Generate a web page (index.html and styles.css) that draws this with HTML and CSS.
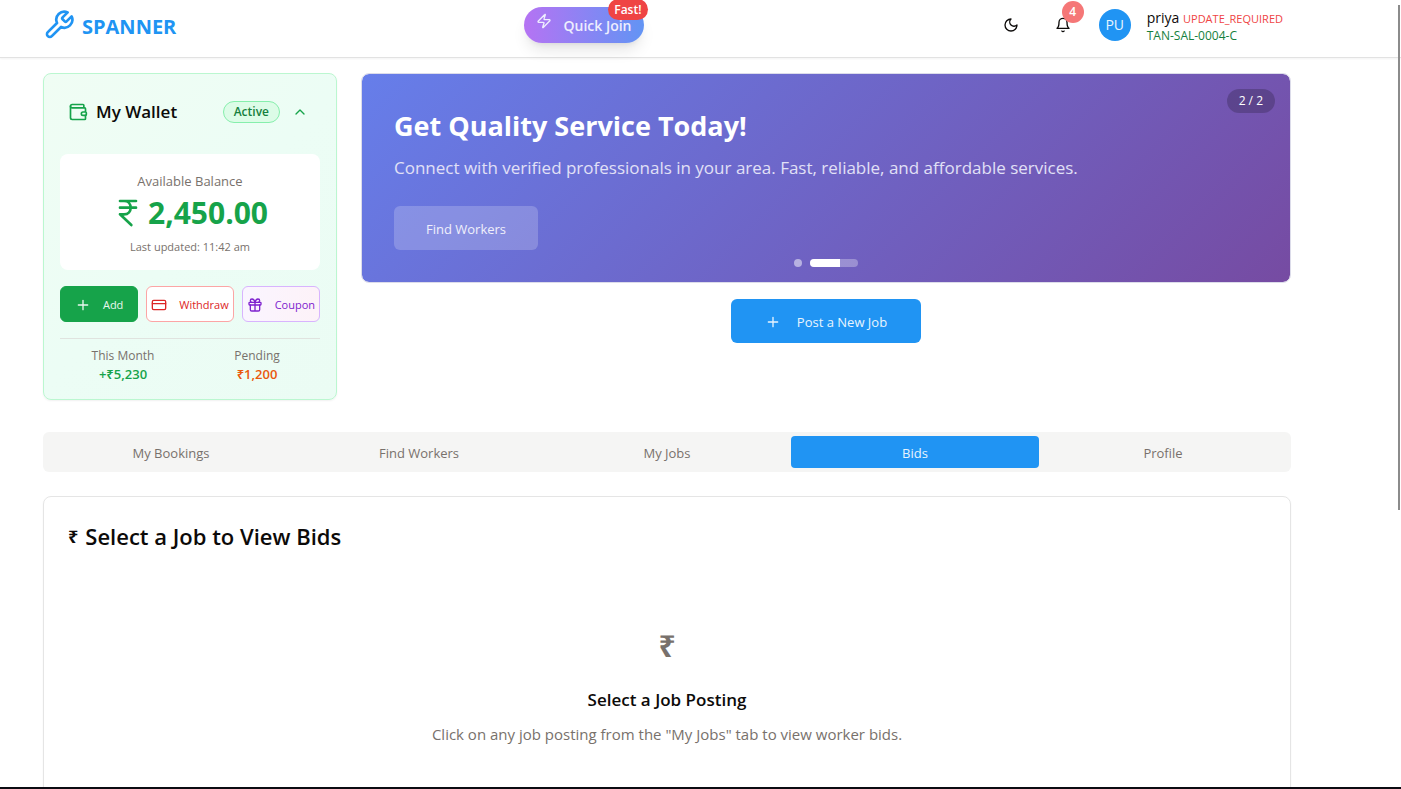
FILE: index.html
```html
<!DOCTYPE html>
<html lang="en">
<head>
<meta charset="utf-8">
<meta name="viewport" content="width=device-width, initial-scale=1">
<title>Spanner</title>
<link rel="stylesheet" href="styles.css">
</head>
<body>
<header class="topbar">
  <div class="wrap topbar-inner">
    <a class="brand" href="#">
      <svg class="icon brand-icon" viewBox="0 0 24 24"><path d="M14.7 6.3a1 1 0 0 0 0 1.4l1.6 1.6a1 1 0 0 0 1.4 0l3.77-3.77a6 6 0 0 1-7.94 7.94l-6.91 6.91a2.12 2.12 0 0 1-3-3l6.91-6.91a6 6 0 0 1 7.94-7.94l-3.76 3.76z"/></svg>
      <span class="brand-name">SPANNER</span>
    </a>
    <button class="quick" type="button">
      <svg class="icon quick-icon" viewBox="0 0 24 24"><path d="M4 14a1 1 0 0 1-.78-1.63l9.9-10.2a.5.5 0 0 1 .86.46l-1.92 6.02A1 1 0 0 0 13 10h7a1 1 0 0 1 .78 1.63l-9.9 10.2a.5.5 0 0 1-.86-.46l1.92-6.02A1 1 0 0 0 11 14z"/></svg>
      <span class="quick-label">Quick Join</span>
      <span class="quick-badge">Fast!</span>
    </button>
    <div class="tools">
      <button class="tool" type="button" aria-label="Toggle theme">
        <svg class="icon" viewBox="0 0 24 24"><path d="M12 3a6 6 0 0 0 9 9 9 9 0 1 1-9-9Z"/></svg>
      </button>
      <button class="tool" type="button" aria-label="Notifications">
        <svg class="icon" viewBox="0 0 24 24"><path d="M6 8a6 6 0 0 1 12 0c0 7 3 9 3 9H3s3-2 3-9"/><path d="M10.3 21a1.94 1.94 0 0 0 3.4 0"/></svg>
        <span class="count">4</span>
      </button>
      <button class="account" type="button">
        <span class="avatar">PU</span>
        <span class="who">
          <span class="who-name">priya <span class="who-flag">UPDATE_REQUIRED</span></span>
          <span class="who-id">TAN-SAL-0004-C</span>
        </span>
      </button>
    </div>
  </div>
</header>

<main class="wrap main">
  <section class="overview">
    <article class="wallet">
      <div class="wallet-head">
        <svg class="icon wallet-icon" viewBox="0 0 24 24"><path d="M19 7V4a1 1 0 0 0-1-1H5a2 2 0 0 0 0 4h15a1 1 0 0 1 1 1v4h-3a2 2 0 0 0 0 4h3a1 1 0 0 0 1-1v-2a1 1 0 0 0-1-1"/><path d="M3 5v14a2 2 0 0 0 2 2h15a1 1 0 0 0 1-1v-4"/></svg>
        <h2 class="wallet-title">My Wallet</h2>
        <span class="status">Active</span>
        <button class="collapse" type="button" aria-label="Collapse wallet">
          <svg class="icon" viewBox="0 0 24 24"><path d="m18 15-6-6-6 6"/></svg>
        </button>
      </div>
      <div class="balance">
        <p class="balance-label">Available Balance</p>
        <p class="balance-value">
          <svg class="icon rupee" viewBox="0 0 24 24"><path d="M6 3h12M6 8h12M6 13l8.500 8M6 13h3M9 13c6.667 0 6.667-10 0-10"/></svg>
          <span>2,450.00</span>
        </p>
        <p class="balance-note">Last updated: 11:42 am</p>
      </div>
      <div class="actions">
        <button class="action add" type="button">
          <svg class="icon" viewBox="0 0 24 24"><path d="M5 12h14M12 5v14"/></svg><span>Add</span>
        </button>
        <button class="action withdraw" type="button">
          <svg class="icon" viewBox="0 0 24 24"><rect width="20" height="14" x="2" y="5" rx="2"/><path d="M2 10h20"/></svg><span>Withdraw</span>
        </button>
        <button class="action coupon" type="button">
          <svg class="icon" viewBox="0 0 24 24"><rect x="3" y="8" width="18" height="4" rx="1"/><path d="M12 8v13M19 12v7a2 2 0 0 1-2 2H7a2 2 0 0 1-2-2v-7M7.500 8a2.500 2.500 0 0 1 0-5A4.800 8 0 0 1 12 8a4.800 8 0 0 1 4.500-5 2.500 2.500 0 0 1 0 5"/></svg><span>Coupon</span>
        </button>
      </div>
      <dl class="stats">
        <div class="stat"><dt>This Month</dt><dd class="gain">+₹5,230</dd></div>
        <div class="stat"><dt>Pending</dt><dd class="due">₹1,200</dd></div>
      </dl>
    </article>

    <div class="feature">
      <section class="banner">
        <h1 class="banner-title">Get Quality Service Today!</h1>
        <p class="banner-text">Connect with verified professionals in your area. Fast, reliable, and affordable services.</p>
        <button class="banner-button" type="button">Find Workers</button>
        <span class="slide-count">2 / 2</span>
        <div class="dots">
          <button class="dot" type="button" aria-label="Slide 1"></button>
          <button class="dot dot-active" type="button" aria-label="Slide 2"><span class="dot-fill"></span></button>
        </div>
      </section>
      <button class="post" type="button">
        <svg class="icon" viewBox="0 0 24 24"><path d="M5 12h14M12 5v14"/></svg><span>Post a New Job</span>
      </button>
    </div>
  </section>

  <nav class="tabs" role="tablist">
    <button class="tab" type="button" role="tab">My Bookings</button>
    <button class="tab" type="button" role="tab">Find Workers</button>
    <button class="tab" type="button" role="tab">My Jobs</button>
    <button class="tab tab-active" type="button" role="tab" aria-selected="true">Bids</button>
    <button class="tab" type="button" role="tab">Profile</button>
  </nav>

  <section class="panel">
    <h2 class="panel-title"><span class="panel-mark">₹</span><span>Select a Job to View Bids</span></h2>
    <div class="empty">
      <div class="empty-mark">₹</div>
      <h3 class="empty-title">Select a Job Posting</h3>
      <p class="empty-text">Click on any job posting from the "My Jobs" tab to view worker bids.</p>
    </div>
  </section>
</main>
<div class="scroll-thumb"></div>
<div class="bottom-edge"></div>
</body>
</html>
```
FILE: styles.css
```css
* { box-sizing: border-box; margin: 0; padding: 0; }
body {
  height: 100vh;
  overflow: hidden;
  background: #fff;
  color: #0c0a09;
  font: 14px/20px "Open Sans", "Noto Sans", sans-serif;
}
button { font: inherit; color: inherit; background: none; border: 0; cursor: pointer; }
a { text-decoration: none; }
.icon {
  flex: none;
  width: 16px;
  height: 16px;
  fill: none;
  stroke: currentColor;
  stroke-width: 2;
  stroke-linecap: round;
  stroke-linejoin: round;
}
.wrap { padding: 0 110px 0 43px; }

.topbar { height: 58px; border-bottom: 1px solid #e2e2e2; box-shadow: 0 1px 2px rgba(0, 0, 0, .05); }
.topbar-inner { display: flex; justify-content: space-between; align-items: center; height: 50px; }
.brand { display: flex; align-items: center; gap: 7px; color: #2094f3; font-size: 20px; line-height: 28px; font-weight: 700; }
.brand-icon { width: 32px; height: 32px; }
.brand-name { padding-top: 4px; }
.quick {
  position: relative;
  display: flex;
  align-items: center;
  gap: 12px;
  height: 36px;
  padding: 0 12px;
  border-radius: 18px;
  background: linear-gradient(90deg, #b573f3, #6294f4);
  box-shadow: 0 10px 15px -3px rgba(0, 0, 0, .1), 0 4px 6px -4px rgba(0, 0, 0, .1);
  color: #eeeefe;
  font-size: 14px;
  font-weight: 600;
}
.quick-icon { align-self: flex-start; margin-top: 6px; }
.quick-label { padding-top: 2px; }
.quick-badge {
  position: absolute;
  top: -8px;
  right: -4px;
  padding: 2px 6px;
  border-radius: 11px;
  background: #ef4444;
  color: #fff;
  font-size: 12px;
  line-height: 17px;
  font-weight: 600;
}
.tools { display: flex; align-items: center; gap: 12px; }
.tool { position: relative; display: grid; place-items: center; width: 40px; height: 40px; }
.count {
  position: absolute;
  top: -4px;
  right: -1px;
  width: 22px;
  height: 22px;
  border-radius: 50%;
  background: #f57777;
  color: #fff;
  font-size: 12px;
  line-height: 22px;
  font-weight: 600;
}
.account { display: flex; align-items: center; gap: 16px; padding: 0 8px 0 4px; text-align: left; }
.avatar { display: grid; place-items: center; width: 32px; height: 32px; border-radius: 50%; background: #2094f3; color: #e8f4fe; }
.who { display: flex; flex-direction: column; padding-top: 3px; line-height: 17px; font-size: 14px; }
.who-flag { color: #ef4444; font-size: 11px; }
.who-id { color: #15803d; font-size: 12px; }

.main { padding-top: 15px; }
.overview { display: grid; grid-template-columns: minmax(0, 294fr) minmax(0, 930fr); column-gap: 24px; }
.wallet {
  padding: 16px;
  border: 1px solid #bbf7d0;
  border-radius: 8px;
  background: linear-gradient(135deg, #f0fdf4, #ecfdf5 50%, #ebfcf4);
  box-shadow: 0 1px 2px rgba(0, 0, 0, .06);
}
.wallet-head { display: flex; align-items: center; height: 44px; padding: 0 12px 0 8px; margin-bottom: 20px; }
.wallet-icon { width: 20px; height: 20px; color: #16a34a; }
.wallet-title { flex: 1; margin-left: 8px; font-size: 17px; line-height: 24px; font-weight: 600; white-space: nowrap; }
.status { padding: 0 10px; border: 1px solid #86efac; border-radius: 11px; background: #dcfce7; color: #15803d; font-size: 12px; font-weight: 600; }
.collapse { display: grid; margin-left: 12px; color: #16a34a; }
.balance { padding: 16px 16px 10px; border-radius: 8px; background: #fff; text-align: center; color: #78716c; }
.balance-label { font-size: 13px; line-height: 22px; }
.balance-value { display: flex; justify-content: center; align-items: center; gap: 4px; color: #16a34a; font-size: 30px; line-height: 42px; font-weight: 700; }
.rupee { width: 32px; height: 32px; }
.balance-note { font-size: 11px; line-height: 26px; }
.actions { display: grid; grid-template-columns: minmax(0, 1fr) auto minmax(0, 1fr); gap: 8px; margin-top: 16px; }
.action { display: flex; align-items: center; justify-content: center; gap: 12px; height: 36px; padding: 1px 4px 0; border: 1px solid; border-radius: 6px; font-size: 11px; }
.add { border-color: #16a34a; background: #16a34a; color: #e9f7ee; }
.withdraw { border-color: #fca5a5; background: #fff; color: #dc2626; }
.coupon { border-color: #d8b4fe; background: linear-gradient(90deg, #faf5ff, #fdf2f8); color: #7e22ce; }
.stats { display: grid; grid-template-columns: 1fr 1fr; gap: 8px; margin-top: 16px; padding-top: 8px; border-top: 1px solid #e0e3df; text-align: center; }
.stat { line-height: 18px; }
.stat dt { font-size: 12px; color: #78716c; }
.stat dd { font-size: 13px; font-weight: 600; }
.stat .gain { color: #16a34a; }
.stat .due { color: #ea580c; }

.feature { display: flex; flex-direction: column; align-items: center; gap: 16px; }
.banner {
  position: relative;
  align-self: stretch;
  padding: 32px;
  border: 1px solid #dcdcea;
  border-radius: 8px;
  background: linear-gradient(135deg, #667eea, #764ba2) padding-box;
  color: #fff;
}
.banner-title { font-size: 27px; line-height: 40px; font-weight: 700; }
.banner-text { margin-top: 8px; font-size: 17px; line-height: 28px; color: #e1e0f6; }
.banner-button { margin-top: 24px; height: 44px; padding: 2px 32px 0; border-radius: 6px; background: rgba(255, 255, 255, .2); color: #f0f0fb; font-size: 13px; }
.slide-count { position: absolute; top: 15px; right: 15px; padding: 0 12px; border-radius: 12px; background: rgba(0, 0, 0, .2); font-size: 12px; line-height: 24px; }
.dots { position: absolute; left: 0; right: 0; bottom: 15px; display: flex; justify-content: center; gap: 8px; }
.dot { width: 8px; height: 8px; border-radius: 4px; background: rgba(255, 255, 255, .5); overflow: hidden; }
.dot-active { width: 48px; background: rgba(255, 255, 255, .3); }
.dot-fill { display: block; width: 30px; height: 8px; background: #fff; }
.post { display: flex; align-items: center; gap: 16px; height: 44px; padding: 1px 34px 0; border-radius: 6px; background: #2094f3; color: #e8f4fe; font-size: 13px; }

.tabs { display: grid; grid-template-columns: repeat(5, 1fr); margin-top: 32px; padding: 4px; border-radius: 6px; background: #f5f5f4; }
.tab { height: 32px; padding-top: 2px; border-radius: 4px; color: #78716c; font-size: 13px; }
.tab-active { background: #2094f3; color: #e8f4fe; }

.panel { margin-top: 24px; padding: 23px 24px 72px; border: 1px solid #e5e5e5; border-radius: 8px; box-shadow: 0 1px 2px rgba(0, 0, 0, .05); }
.panel-title { display: flex; align-items: center; gap: 7px; font-size: 22px; line-height: 32px; font-weight: 600; }
.panel-mark { font-size: 18px; font-weight: 700; }
.empty { padding-top: 72px; text-align: center; }
.empty-mark { color: #78716c; font-size: 30px; line-height: 44px; font-weight: 700; }
.empty-title { margin-top: 18px; font-size: 17px; line-height: 28px; font-weight: 600; }
.empty-text { margin-top: 8px; font-size: 15px; line-height: 24px; color: #78716c; }

.scroll-thumb { position: fixed; top: 5px; right: 1px; width: 2px; height: 64vh; background: #8b8b8b; }
.bottom-edge { position: fixed; left: 0; right: 0; bottom: 0; height: 2px; background: #0b0b12; }
```
